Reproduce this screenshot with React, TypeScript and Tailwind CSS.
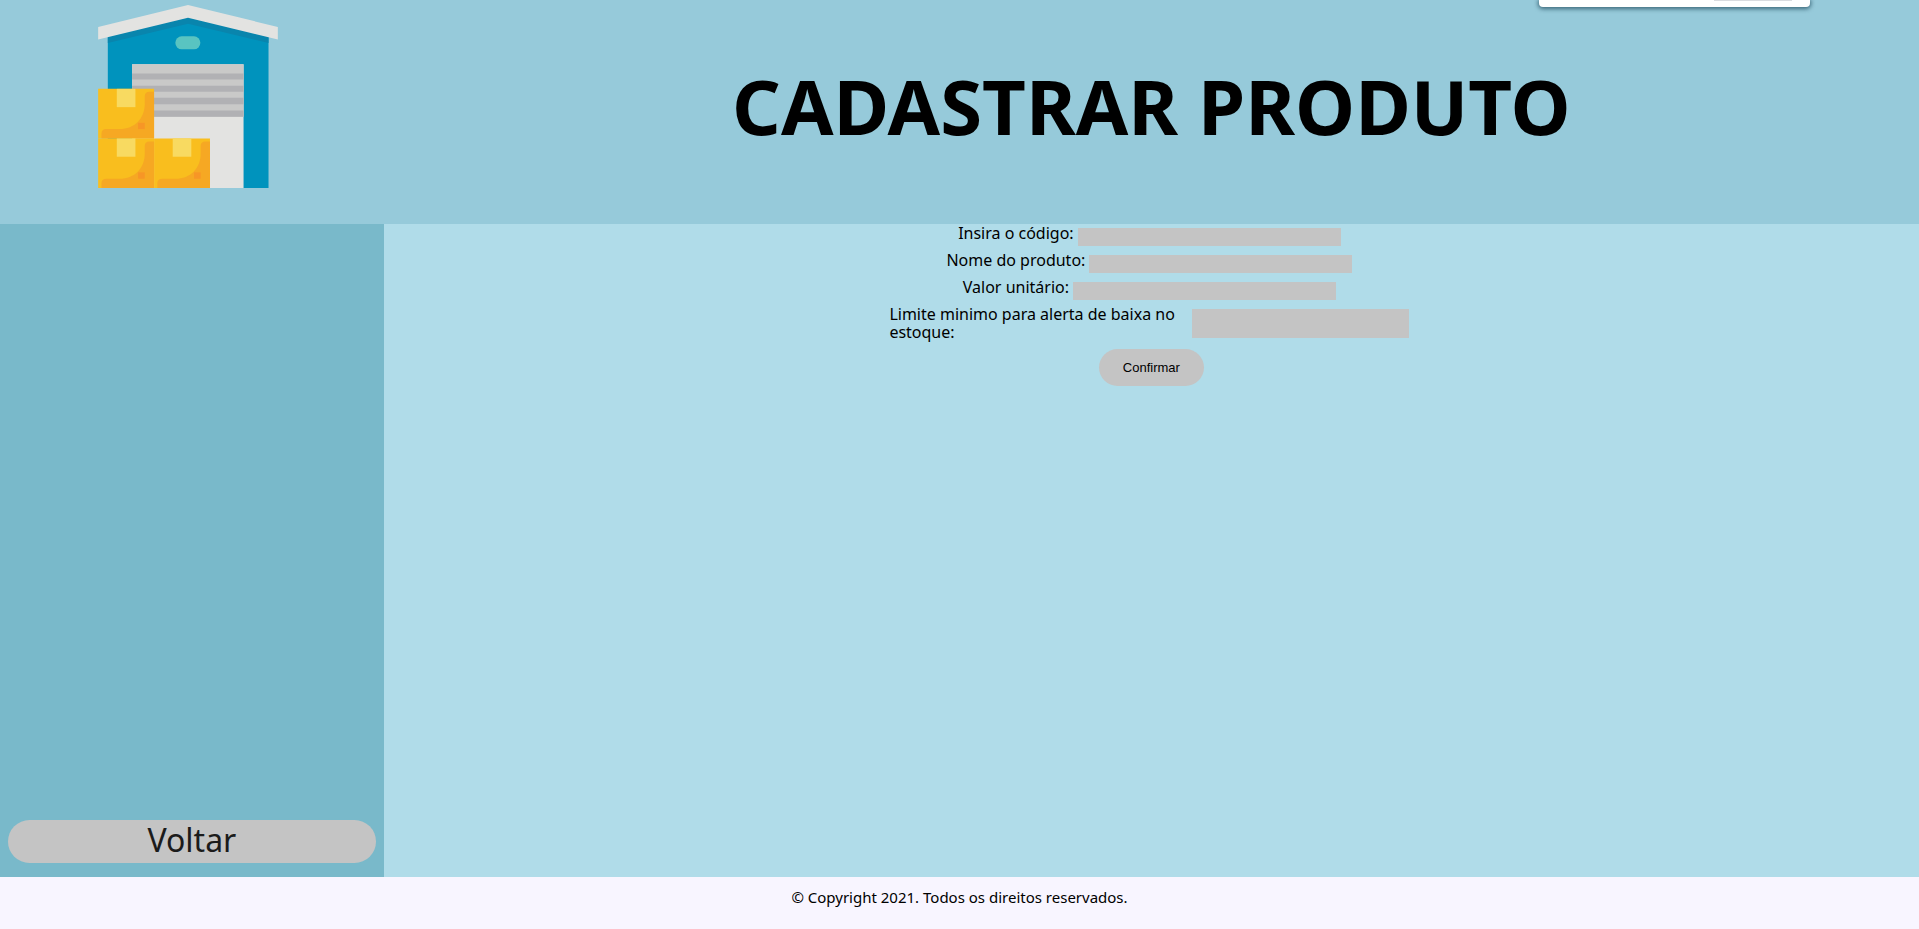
const inputStyle = "bg-[#c4c4c4] text-sm text-black outline-none focus:ring-1 focus:ring-[#0093bd]";

const fields = [
  { id: "codigo", label: "Insira o código:" },
  { id: "nome", label: "Nome do produto:" },
  { id: "valor", label: "Valor unitário:" },
];

function Box({ x, y }: { x: number; y: number }) {
  return (
    <g transform={`translate(${x} ${y})`}>
      <path fill="#f9be1e" d="M0 0h168v149H0z" />
      <path fill="#f6a823" d="M10 149v-14q0-14 14-14h40c46 0 76-32 76-76V23q0-14 14-14h14v140z" />
      <path fill="#f8da61" d="M56 0h56v55H56z" />
      <path fill="#f79626" d="M120 102h20v19h-20z" />
    </g>
  );
}

function WarehouseLogo() {
  return (
    <svg viewBox="54 14 540 550" className="h-[183px] w-[180px]" role="img" aria-label="Estoque">
      <path fill="#0093bd" d="M83 104 324 48l242 56v460H83z" />
      <path fill="#0985ad" d="M83 104 324 48l242 56v24L324 70 83 128z" />
      <path fill="#e3e3e1" d="M54 80 324 14l270 66v38L324 52 54 118z" />
      <rect x="286" y="108" width="75" height="39" rx="19" fill="#59c4c1" />
      <path fill="#e3e3e1" d="M156 192h335v372H156z" />
      <path fill="#c9c9c8" d="M156 192h335v158H156z" />
      <path fill="#b1b1b4" d="M156 220h335v18H156zM156 257h335v18H156zM156 293h335v19H156zM156 331h335v19H156z" />
      <Box x={54} y={266} />
      <Box x={54} y={415} />
      <Box x={222} y={415} />
    </svg>
  );
}

export default function App() {
  return (
    <div className="relative flex min-h-screen flex-col overflow-hidden bg-[#f8f5ff] font-['Noto_Sans',sans-serif] text-black">
      <div className="absolute top-0 right-[109px] flex h-[7px] w-[271px] justify-end rounded-b bg-white pr-[18px] shadow-[0_1px_4px_1px_rgba(0,40,60,0.6)]">
        <div className="h-px w-[78px] bg-[#dadce0]" />
      </div>

      <header className="flex h-56 bg-[#96cada]">
        <div className="flex w-1/5 justify-center pt-[5px] pr-2">
          <WarehouseLogo />
        </div>
        <div className="flex flex-1 items-center justify-center">
          <h1 className="pb-3 text-[76px] leading-none font-bold">CADASTRAR PRODUTO</h1>
        </div>
      </header>

      <div className="flex flex-1">
        <aside className="flex w-1/5 flex-col justify-end bg-[#79b9ca] px-2 pb-[14px]">
          <button type="button" className="h-[43px] w-full rounded-full bg-[#c4c4c4] pb-1 text-[32px] leading-none text-[#1b1b1b]">
            Voltar
          </button>
        </aside>

        <main className="flex-1 bg-[#b0dce9]">
          <form className="flex flex-col items-center" onSubmit={(e) => e.preventDefault()}>
            {fields.map((f) => (
              <div key={f.id} className="flex h-[27px] items-start pr-1">
                <label htmlFor={f.id} className="text-base leading-[18px]">
                  {f.label}
                </label>
                <input id={f.id} type="text" className={`mt-1 ml-1 h-[18px] w-[263px] ${inputStyle}`} />
              </div>
            ))}
            <div className="flex items-start pr-1">
              <label htmlFor="limite" className="w-[303px] text-base leading-[18px]">
                Limite minimo para alerta de baixa no estoque:
              </label>
              <input id="limite" type="text" className={`mt-1 h-[29px] w-[217px] ${inputStyle}`} />
            </div>
            <button type="submit" className="mt-2 h-[37px] rounded-full bg-[#c4c4c4] px-6 font-['Liberation_Sans',sans-serif] text-[13px]">
              Confirmar
            </button>
          </form>
        </main>
      </div>

      <footer className="flex h-[52px] items-start justify-center pt-[10px] text-[15px] leading-5">
        © Copyright 2021. Todos os direitos reservados.
      </footer>
    </div>
  );
}
